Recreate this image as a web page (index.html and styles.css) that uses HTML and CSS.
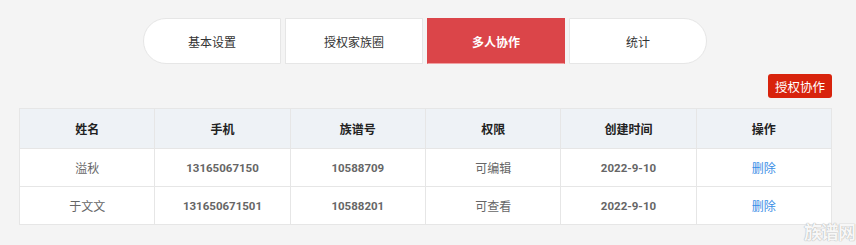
FILE: index.html
```html
<!DOCTYPE html>
<html lang="zh">
<head>
<meta charset="utf-8">
<link rel="stylesheet" href="styles.css">
</head>
<body>
<div class="page">
  <nav class="tabs">
    <div class="tab tab-first">基本设置</div>
    <div class="tab">授权家族圈</div>
    <div class="tab tab-active">多人协作</div>
    <div class="tab tab-last">统计</div>
  </nav>
  <div class="toolbar">
    <button class="btn-auth">授权协作</button>
  </div>
  <table class="grid">
    <thead>
      <tr><th>姓名</th><th>手机</th><th>族谱号</th><th>权限</th><th>创建时间</th><th>操作</th></tr>
    </thead>
    <tbody>
      <tr><td>溢秋</td><td class="num">13165067150</td><td class="num">10588709</td><td>可编辑</td><td class="num">2022-9-10</td><td><a class="link">删除</a></td></tr>
      <tr><td>于文文</td><td class="num">131650671501</td><td class="num">10588201</td><td>可查看</td><td class="num">2022-9-10</td><td><a class="link">删除</a></td></tr>
    </tbody>
  </table>
  <div class="watermark">族谱网</div>
</div>
</body>
</html>
```
FILE: styles.css
```css
html, body {
  margin: 0;
  padding: 0;
  background: #f4f4f4;
  font-family: Roboto, "Noto Sans CJK SC", sans-serif;
}
.page {
  position: relative;
  width: 856px;
  height: 245px;
  overflow: hidden;
}
.tabs {
  display: flex;
  gap: 4px;
  padding: 18px 0 0 143px;
}
.tab {
  box-sizing: border-box;
  width: 138px;
  height: 46px;
  background: #fff;
  border: 1px solid #e6e6e6;
  display: flex;
  align-items: center;
  justify-content: center;
  font-size: 12px;
  color: #333;
}
.tab-first {
  border-radius: 23px 0 0 23px;
}
.tab-last {
  border-radius: 0 23px 23px 0;
}
.tab-active {
  background: #db4549;
  border-color: #db4549;
  border-bottom-color: #f0a0a2;
  color: #fff;
  font-weight: 700;
}
.toolbar {
  display: flex;
  justify-content: flex-end;
  padding: 10px 24px 0 0;
}
.btn-auth {
  width: 64px;
  height: 24px;
  border: none;
  border-radius: 3px;
  background: #d8230c;
  color: #fff;
  font-family: Roboto, "Noto Sans CJK SC", sans-serif;
  font-size: 12.5px;
  padding: 0;
}
.grid {
  margin: 10px 0 0 19px;
  width: 813px;
  border-collapse: collapse;
  table-layout: fixed;
  background: #fff;
}
.grid th, .grid td {
  border: 1px solid #e6e6e6;
  text-align: center;
  font-size: 12px;
  padding: 0;
}
.grid th {
  height: 39px;
  background: #eef2f6;
  color: #222;
  font-weight: 700;
}
.grid td {
  height: 37px;
  color: #666;
}
.grid td.num {
  font-weight: 700;
  font-size: 11.5px;
}
.link {
  color: #3a8ee6;
  cursor: pointer;
}
.watermark {
  position: absolute;
  right: 1px;
  bottom: 1px;
  font-size: 18px;
  line-height: 22px;
  font-weight: 700;
  color: rgba(255, 255, 255, 0.92);
  text-shadow: 0 0 1px #aaa, 0 0 1px #bbb;
  letter-spacing: -1px;
}
```
